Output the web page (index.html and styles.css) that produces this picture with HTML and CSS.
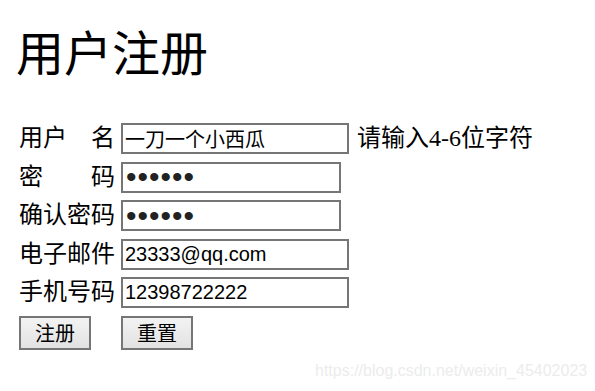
FILE: index.html
```html
<!DOCTYPE html>
<html lang="zh">
<head>
	<meta charset="UTF-8">
	<title>用户注册</title>

	<link rel="stylesheet" href="styles.css">
</head>
<body>

	<h1 class="title">用户注册</h1>

	<form class="regform" action="#">
		<div class="row">
			<label class="label"><span>用户</span><span>名</span></label>
			<input class="ipt" type="text" value="一刀一个小西瓜">
			<span class="tip">请输入4-6位字符</span>
		</div>
		<div class="row">
			<label class="label"><span>密</span><span>码</span></label>
			<input class="ipt pwd" type="password" value="123456">
		</div>
		<div class="row">
			<label class="label"><span>确认密码</span></label>
			<input class="ipt pwd" type="password" value="123456">
		</div>
		<div class="row">
			<label class="label"><span>电子邮件</span></label>
			<input class="ipt" type="text" value="23333@qq.com">
		</div>
		<div class="row">
			<label class="label"><span>手机号码</span></label>
			<input class="ipt" type="text" value="12398722222">
		</div>
		<div class="btns">
			<button class="btn" type="button">注册</button>
			<button class="btn" type="reset">重置</button>
		</div>
	</form>

	<div class="mark">https://blog.csdn.net/weixin_45402023</div>

</body>
</html>
```

FILE: styles.css
```css
*{
	margin: 0;
	padding: 0;
	box-sizing: border-box;
}

body{
	width: 595px;
	height: 391px;
	position: relative;
	overflow: hidden;
	background: #fff;
	color: #000;
	font-family: "Liberation Serif", "Noto Sans CJK SC", serif;
}

.title{
	padding: 21px 0 0 16px;
	font-size: 48px;
	font-weight: normal;
	line-height: 58px;
	font-family: "Noto Sans CJK SC", sans-serif;
}

.regform{
	padding: 44px 0 0 19px;
}

.row{
	display: flex;
	align-items: center;
	height: 31px;
	margin-bottom: 7.6px;
	font-size: 24px;
}

.label{
	width: 96px;
	margin-right: 6px;
	display: flex;
	justify-content: space-between;
	line-height: 31px;
}

.ipt{
	width: 228px;
	height: 31px;
	border: 2px solid #767676;
	padding: 0 2px;
	font-size: 20px;
	font-family: "Liberation Sans", "Noto Sans CJK SC", sans-serif;
	color: #000;
	outline: none;
}

/*密码框比文本框窄一点,圆点大一些*/
.ipt.pwd{
	width: 220px;
	padding-left: 3px;
	font-size: 30px;
	letter-spacing: 1px;
	color: #222;
}

.tip{
	margin-left: 8px;
	line-height: 31px;
}

.btns{
	display: flex;
	gap: 30px;
}

.btn{
	width: 72px;
	height: 34px;
	border: 2px solid #767676;
	background: linear-gradient(#f3f3f3, #e2e2e2);
	font-size: 20px;
	font-family: "Noto Sans CJK SC", sans-serif;
	color: #000;
}

/*右下角水印*/
.mark{
	position: absolute;
	left: 315px;
	top: 362px;
	font-size: 16px;
	color: #ececec;
	font-family: "Liberation Sans", sans-serif;
}
```
